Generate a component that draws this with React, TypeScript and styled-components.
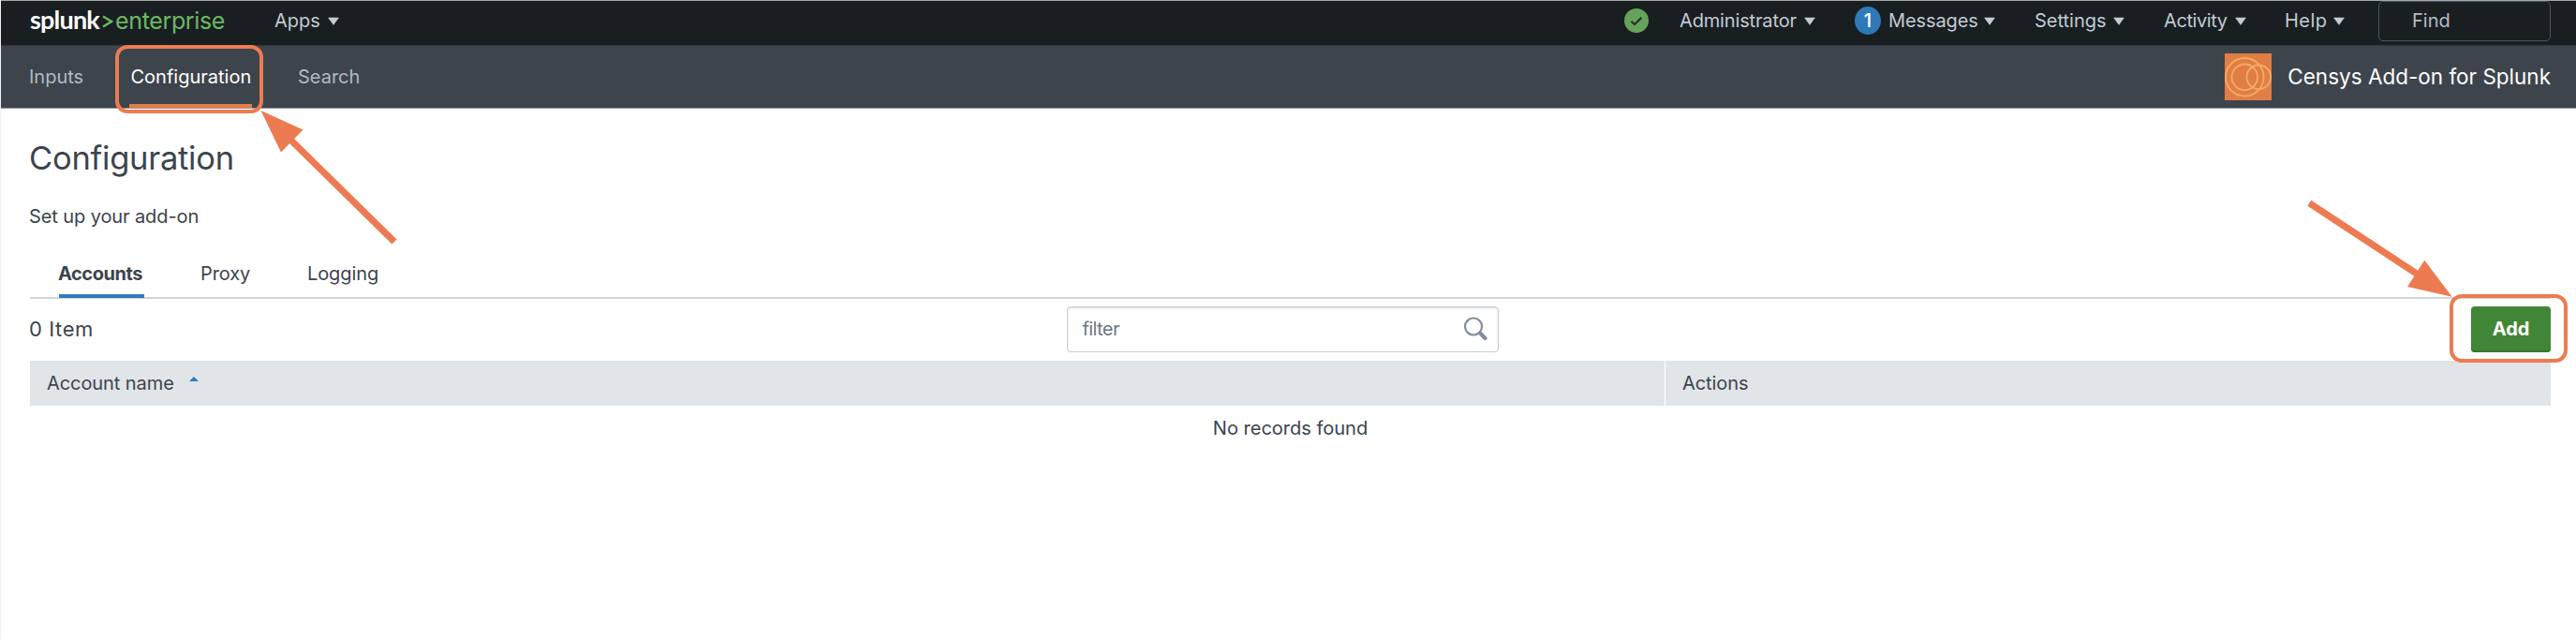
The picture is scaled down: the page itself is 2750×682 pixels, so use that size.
import React from "react";
import styled, { createGlobalStyle } from "styled-components";

const Global = createGlobalStyle`
  * { box-sizing: border-box; }
  body { margin: 0; background: #fff; }
`;

const Page = styled.div`
  position: relative;
  width: 2750px;
  height: 682px;
  overflow: hidden;
  background: #fff;
  border-left: 1px solid #f1f1f3;
  color: #3c444d;
  font: 400 20px/24px Inter, "Liberation Sans", sans-serif;
`;

const TopBar = styled.header`
  display: flex;
  align-items: flex-start;
  height: 48px;
  margin-left: -1px;
  padding: 0 27px 0 31px;
  background: #191e21;
  border-top: 1px solid #a3a9a9;
  border-left: 1px solid #e6e8e9;
`;

const Logo = styled.div`
  display: flex;
  align-items: baseline;
  width: 261px;
  height: 42px;
  line-height: 40px;
  white-space: nowrap;
`;

const LogoName = styled.span`
  width: 77px;
  color: #fff;
  font: 700 27px/40px Lato, sans-serif;
  letter-spacing: -0.8px;
`;

const Chevron = styled.svg`
  width: 12px;
  height: 16px;
  margin-right: 2px;
`;

const LogoEdition = styled.span`
  color: #6cb862;
  font-size: 25px;
  letter-spacing: -0.35px;
`;

const Menu = styled.div<{ $width: number }>`
  display: flex;
  align-items: center;
  width: ${(p) => p.$width}px;
  height: 42px;
  color: #c3cbd4;
  white-space: nowrap;
`;

const MenuLabel = styled.span<{ $width: number; $spacing?: number }>`
  width: ${(p) => p.$width}px;
  letter-spacing: ${(p) => p.$spacing ?? 0}px;
`;

const MenuGroup = styled.div`
  display: flex;
  margin-left: auto;
`;

const Health = styled.svg`
  width: 26px;
  height: 26px;
  margin-top: 8px;
  margin-right: 33px;
`;

const Badge = styled.span`
  width: 28px;
  height: 30px;
  margin-right: 8px;
  border-radius: 50%;
  background: #2f79b9;
  color: #fff;
  font-weight: 500;
  line-height: 30px;
  text-align: center;
`;

const Find = styled.div`
  width: 184px;
  height: 43px;
  padding-left: 35px;
  border: 1.5px solid #4b545f;
  border-radius: 5px;
  color: #b5bcc6;
  line-height: 41px;
`;

const AppBar = styled.nav`
  display: flex;
  align-items: stretch;
  height: 68px;
  margin-left: -1px;
  padding: 0 27px 0 30px;
  background: #3e444c;
  border-top: 1px solid #31373e;
  border-bottom: 1px solid #92979e;
  border-left: 1px solid #e6e8e9;
`;

const NavItem = styled.a<{ $active?: boolean; $width: number; $gap: number }>`
  width: ${(p) => p.$width}px;
  margin-right: ${(p) => p.$gap}px;
  border-bottom: 4px solid ${(p) => (p.$active ? "#e07e45" : "transparent")};
  padding-left: ${(p) => (p.$active ? 1.5 : 0)}px;
  color: ${(p) => (p.$active ? "#fff" : "#b3bac4")};
  line-height: 66px;
  white-space: nowrap;
`;

const AppBrand = styled.div`
  display: flex;
  align-items: center;
  gap: 17px;
  margin-left: auto;
  color: #fff;
  font-size: 22.5px;
  white-space: nowrap;
`;

const AppIcon = styled.svg`
  width: 50px;
  height: 50px;
`;

const Main = styled.main`
  padding: 0 27px 0 31px;
`;

const Title = styled.h1`
  margin: 0 0 0 -1px;
  padding-top: 31px;
  font-size: 34.5px;
  font-weight: 400;
  line-height: 43px;
  letter-spacing: -0.25px;
`;

const Intro = styled.p`
  margin: 0 0 0 -1px;
  padding-top: 29px;
  letter-spacing: -0.1px;
`;

const Tabs = styled.div`
  display: flex;
  height: 76px;
  padding: 0 31px 0;
  border-bottom: 2px solid #d2d6da;
`;

const Tab = styled.div<{ $active?: boolean; $width: number }>`
  width: ${(p) => p.$width}px;
  height: 75px;
  margin-right: 61px;
  padding-top: 37px;
  letter-spacing: ${(p) => (p.$active ? "-0.45px" : "-0.1px")};
  text-indent: -1px;
  border-bottom: 4px solid ${(p) => (p.$active ? "#2f7bbf" : "transparent")};
  font-weight: ${(p) => (p.$active ? 700 : 400)};
  white-space: nowrap;
`;

const Toolbar = styled.div`
  display: grid;
  grid-template-columns: 1106.5px 461px 1fr;
  align-items: center;
  height: 66px;
  padding-bottom: 2px;
`;

const Count = styled.div`
  margin-left: -1px;
  font-size: 22px;
  letter-spacing: 0.6px;
`;

const Filter = styled.label`
  display: flex;
  align-items: center;
  justify-content: space-between;
  height: 49px;
  padding: 0 11px 0 16px;
  border: 1.5px solid #c5ccd4;
  border-radius: 4px;
  box-shadow: inset 0 1px 2px #dfe3e7;
  color: #6b7785;
  letter-spacing: -0.6px;
`;

const SearchIcon = styled.svg`
  width: 26px;
  height: 26px;
`;

const AddButton = styled.button`
  justify-self: end;
  width: 85px;
  height: 49px;
  padding: 0;
  border: 0;
  border-radius: 4px;
  background: #418636;
  box-shadow: inset 0 -2px 1px #37772f;
  color: #fff;
  font: 700 20px/46px Inter, sans-serif;
`;

const TableHead = styled.div`
  display: grid;
  grid-template-columns: 1744.5px 1fr;
  gap: 1.5px;
  height: 48px;
`;

const HeadCell = styled.div`
  display: flex;
  align-items: center;
  padding: 0 0 1px 18px;
  background: #e1e5e8;
  letter-spacing: -0.08px;
`;

const SortIcon = styled.svg`
  width: 10px;
  height: 5px;
  margin: 0 0 8px 16px;
`;

const Empty = styled.div`
  padding-top: 12px;
  text-align: center;
`;

const Callout = styled.div<{ $x: number; $y: number; $w: number }>`
  position: absolute;
  left: ${(p) => p.$x}px;
  top: ${(p) => p.$y}px;
  width: ${(p) => p.$w}px;
  height: 72.5px;
  border: 4.5px solid #ed7b51;
  border-radius: 13px;
`;

const Arrows = styled.svg`
  position: absolute;
  left: -1px;
  top: 0;
  pointer-events: none;
`;

const Caret = () => (
  <svg width="12" height="9" viewBox="0 0 12 9">
    <path d="M.6 1h10.8L6 8.4z" fill="#c3cbd4" stroke="#c3cbd4" strokeWidth=".6" />
  </svg>
);

export default function App() {
  return (
    <Page>
      <Global />
      <TopBar>
        <Logo>
          <LogoName>splunk</LogoName>
          <Chevron viewBox="0 0 12 16">
            <path d="M1 2.5 10 8 1 13.5" fill="none" stroke="#6cb862" strokeWidth="2.4" />
          </Chevron>
          <LogoEdition>enterprise</LogoEdition>
        </Logo>
        <Menu $width={70}>
          <MenuLabel $width={57}>Apps</MenuLabel>
          <Caret />
        </Menu>
        <MenuGroup>
          <Health viewBox="0 0 26 26">
            <circle cx="13" cy="13" r="13" fill="#65a35b" />
            <path d="m7.5 13.8 3.6 3.4 7.2-7.4" fill="none" stroke="#222b25" strokeWidth="2" />
          </Health>
          <Menu $width={187}>
            <MenuLabel $width={133} $spacing={-0.15}>Administrator</MenuLabel>
            <Caret />
          </Menu>
          <Menu $width={192}>
            <Badge>1</Badge>
            <MenuLabel $width={102} $spacing={-0.1}>Messages</MenuLabel>
            <Caret />
          </Menu>
          <Menu $width={138}>
            <MenuLabel $width={84}>Settings</MenuLabel>
            <Caret />
          </Menu>
          <Menu $width={129}>
            <MenuLabel $width={76} $spacing={-0.4}>Activity</MenuLabel>
            <Caret />
          </Menu>
          <Menu $width={100}>
            <MenuLabel $width={52} $spacing={0.5}>Help</MenuLabel>
            <Caret />
          </Menu>
          <Find>Find</Find>
        </MenuGroup>
      </TopBar>
      <AppBar>
        <NavItem $width={57} $gap={50}>Inputs</NavItem>
        <NavItem $active $width={131} $gap={49}>Configuration</NavItem>
        <NavItem $width={66} $gap={0}>Search</NavItem>
        <AppBrand>
          <AppIcon viewBox="0 0 50 50">
            <rect width="50" height="50" fill="#e07e45" />
            <g fill="none" stroke="#f4ac62" strokeWidth="1.8">
              <circle cx="21.3" cy="25.3" r="20.3" />
              <circle cx="21.3" cy="25.3" r="13.8" />
              <circle cx="36.3" cy="25.3" r="12.8" />
            </g>
          </AppIcon>
          <span>Censys Add-on for Splunk</span>
        </AppBrand>
      </AppBar>
      <Main>
        <Title>Configuration</Title>
        <Intro>Set up your add-on</Intro>
        <Tabs>
          <Tab $active $width={91}>Accounts</Tab>
          <Tab $width={53}>Proxy</Tab>
          <Tab $width={77}>Logging</Tab>
        </Tabs>
        <Toolbar>
          <Count>0 Item</Count>
          <Filter>
            <span>filter</span>
            <SearchIcon viewBox="0 0 26 26" fill="none" stroke="#818d99">
              <circle cx="11" cy="10.5" r="9" strokeWidth="2.2" />
              <path d="m18 17.5 5.5 5.5" strokeWidth="4" strokeLinecap="round" />
            </SearchIcon>
          </Filter>
          <AddButton>Add</AddButton>
        </Toolbar>
        <TableHead>
          <HeadCell>
            Account name
            <SortIcon viewBox="0 0 10 5">
              <path d="M0 5 5 0l5 5z" fill="#2f7bbf" />
            </SortIcon>
          </HeadCell>
          <HeadCell>Actions</HeadCell>
        </TableHead>
        <Empty>No records found</Empty>
      </Main>
      <Callout $x={121.7} $y={48} $w={158.5} />
      <Callout $x={2614.3} $y={314.2} $w={126} />
      <Arrows width="2750" height="682" fill="#ed7b51" stroke="none">
        <path d="M278.5 118 323.5 138.5 300 162.5z" />
        <path d="M2617.7 316.8 2588.3 277.7 2570 306z" />
        <g stroke="#ed7b51" strokeWidth="7.3">
          <path d="M309 148 421 258" />
          <path d="M2465.3 216.7 2582 293.5" />
        </g>
      </Arrows>
    </Page>
  );
}
